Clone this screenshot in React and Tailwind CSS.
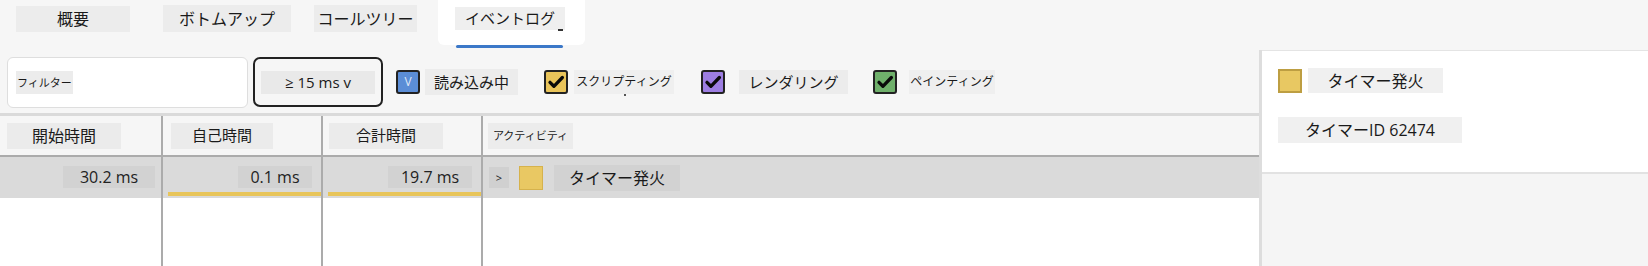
import React from "react";

const Check = () => (
  <svg viewBox="0 0 24 24" className="w-[18px] h-[18px]">
    <path d="M4 12.5l5.2 5.2L20.5 6" fill="none" stroke="#0a0a0a" strokeWidth="4.4" strokeLinecap="round" strokeLinejoin="round" />
  </svg>
);

export default function App() {
  return (
    <div className="w-[1648px] h-[266px] overflow-hidden bg-[#f6f6f6] text-[#1a1a1a] font-['Open_Sans','Noto_Sans_CJK_JP',sans-serif] flex flex-col leading-none">
      {/* Tabs */}
      <div className="h-[50px] shrink-0 flex items-start">
        <div className="ml-[16px] mt-[6px] w-[114px] h-[26px] bg-[#ececec] flex items-center justify-center text-[16px]">概要</div>
        <div className="ml-[33px] mt-[5px] w-[128px] h-[27px] bg-[#ececec] flex items-center justify-center text-[16px]">ボトムアップ</div>
        <div className="ml-[23px] mt-[5px] w-[103px] h-[27px] bg-[#ececec] flex items-center justify-center text-[16px]">コールツリー</div>
        <div className="ml-[21px] flex flex-col">
          <div className="relative w-[147px] h-[45px] bg-white rounded-b-[6px] pt-[7px] pl-[17px]">
            <div className="w-[110px] h-[23px] bg-[#efefef] flex items-center justify-center text-[15px]">イベントログ</div>
            <span className="absolute left-[120px] top-[29px] w-[5px] h-[2px] bg-[#333]" />
          </div>
          <div className="ml-[18px] w-[107px] h-[3px] bg-[#3b78c8] rounded-full" />
        </div>
      </div>

      <div className="flex flex-1 min-h-0">
        {/* Left */}
        <div className="w-[1259px] flex flex-col">
          {/* Toolbar */}
          <div className="h-[63px] shrink-0 flex items-center pt-[1px]">
            <div className="ml-[7px] w-[241px] h-[51px] bg-white border border-[#dedede] rounded-[6px] flex items-center pl-[8px]">
              <span className="bg-[#ececec] h-[23px] px-[1px] text-[11px] flex items-center">フィルター</span>
            </div>
            <div className="ml-[5px] w-[130px] h-[50px] border-2 border-[#222] rounded-[7px] flex items-center justify-center">
              <span className="w-[114px] h-[23px] bg-[#e9e9e9] flex items-center justify-center text-[15px]">≥ 15 ms v</span>
            </div>
            <div className="ml-[13px] w-[24px] h-[24px] rounded-[3px] border-2 border-[#222] bg-[#5b8dd6] flex items-center justify-center text-[12px] text-[#dfe7f6]">V</div>
            <span className="ml-[5px] w-[93px] h-[26px] bg-[#ececec] flex items-center justify-center text-[15px]">読み込み中</span>
            <div className="ml-[26px] w-[24px] h-[24px] rounded-[3px] border-2 border-[#222] bg-[#e9c45a] flex items-center justify-center"><Check /></div>
            <span className="relative ml-[6px] w-[100px] h-[24px] bg-[#efefef] flex items-center justify-center text-[12px]">
              スクリプティング
              <span className="absolute left-[50px] top-[24px] w-[2px] h-[2px] bg-[#555]" />
            </span>
            <div className="ml-[27px] w-[24px] h-[24px] rounded-[3px] border-2 border-[#222] bg-[#9d7ee2] flex items-center justify-center"><Check /></div>
            <span className="ml-[14px] w-[109px] h-[24px] bg-[#ececec] flex items-center justify-center text-[15px]">レンダリング</span>
            <div className="ml-[25px] w-[24px] h-[24px] rounded-[3px] border-2 border-[#222] bg-[#6fb06b] flex items-center justify-center"><Check /></div>
            <span className="ml-[12px] w-[86px] h-[24px] bg-[#efefef] flex items-center justify-center text-[12px]">ペインティング</span>
          </div>

          {/* Table header */}
          <div className="h-[44px] shrink-0 flex bg-[#f6f6f6] border-t-[3px] border-[#dadada]">
            <div className="w-[161px] flex items-center pl-[7px] border-b-2 border-[#ababab]">
              <span className="w-[114px] h-[26px] bg-[#ebebeb] flex items-center justify-center text-[16px]">開始時間</span>
            </div>
            <div className="w-[160px] flex items-center pl-[8px] border-l-2 border-b-2 border-[#ababab]">
              <span className="w-[102px] h-[26px] bg-[#ebebeb] flex items-center justify-center text-[15px]">自己時間</span>
            </div>
            <div className="w-[160px] flex items-center pl-[6px] border-l-2 border-b-2 border-[#ababab]">
              <span className="w-[114px] h-[26px] bg-[#ebebeb] flex items-center justify-center text-[15px]">合計時間</span>
            </div>
            <div className="flex-1 flex items-center pl-[5px] border-l-2 border-b-2 border-[#ababab]">
              <span className="w-[85px] h-[26px] bg-[#ececec] flex items-center justify-center text-[11px]">アクティビティ</span>
            </div>
          </div>

          {/* Data row */}
          <div className="h-[41px] shrink-0 flex bg-[#dadada]">
            <div className="w-[161px] flex items-start justify-end pr-[6px] pt-[9px]">
              <span className="w-[92px] h-[22px] bg-[#d2d2d2] flex items-center justify-center text-[16px] text-[#222]">30.2 ms</span>
            </div>
            <div className="w-[160px] flex flex-col border-l-2 border-[#ababab]">
              <div className="flex justify-end pr-[9px] pt-[9px]">
                <span className="w-[74px] h-[22px] bg-[#d2d2d2] flex items-center justify-center text-[16px] text-[#222]">0.1 ms</span>
              </div>
              <div className="mt-auto mb-[2px] ml-[5px] h-[4px] bg-[#e8c55a]" />
            </div>
            <div className="w-[160px] flex flex-col border-l-2 border-[#ababab]">
              <div className="flex justify-end pr-[9px] pt-[9px]">
                <span className="w-[84px] h-[22px] bg-[#d2d2d2] flex items-center justify-center text-[16px] text-[#222]">19.7 ms</span>
              </div>
              <div className="mt-auto mb-[2px] ml-[5px] h-[4px] bg-[#e8c55a]" />
            </div>
            <div className="flex-1 flex items-center pl-[6px] border-l-2 border-[#ababab]">
              <span className="w-[20px] h-[21px] bg-[#d0d0d0] flex items-center justify-center text-[11px]">&gt;</span>
              <span className="ml-[10px] w-[24px] h-[24px] bg-[#e9c863] border border-[#d6b24c]" />
              <span className="ml-[11px] w-[126px] h-[26px] bg-[#d2d2d2] flex items-center justify-center text-[16px]">タイマー発火</span>
            </div>
          </div>

          {/* Empty area */}
          <div className="flex-1 flex bg-white">
            <div className="w-[161px]" />
            <div className="w-[160px] border-l-2 border-[#ababab]" />
            <div className="w-[160px] border-l-2 border-[#ababab]" />
            <div className="flex-1 border-l-2 border-[#ababab]" />
          </div>
        </div>

        {/* Right panel */}
        <div className="flex-1 flex flex-col border-l-[3px] border-[#dddddd]">
          <div className="h-[124px] shrink-0 bg-white border-t border-[#e4e4e4] border-b-2 border-b-[#e2e2e2] pl-[16px] pt-[17px]">
            <div className="flex items-center">
              <span className="w-[24px] h-[24px] bg-[#e8c862] border-2 border-[#bd9e42]" />
              <span className="ml-[6px] w-[135px] h-[25px] bg-[#f0f0f0] flex items-center justify-center text-[16px]">タイマー発火</span>
            </div>
            <div className="mt-[24px] w-[184px] h-[26px] bg-[#f0f0f0] flex items-center justify-center text-[16px]">タイマーID 62474</div>
          </div>
          <div className="flex-1 bg-[#f5f5f5]" />
        </div>
      </div>
    </div>
  );
}
